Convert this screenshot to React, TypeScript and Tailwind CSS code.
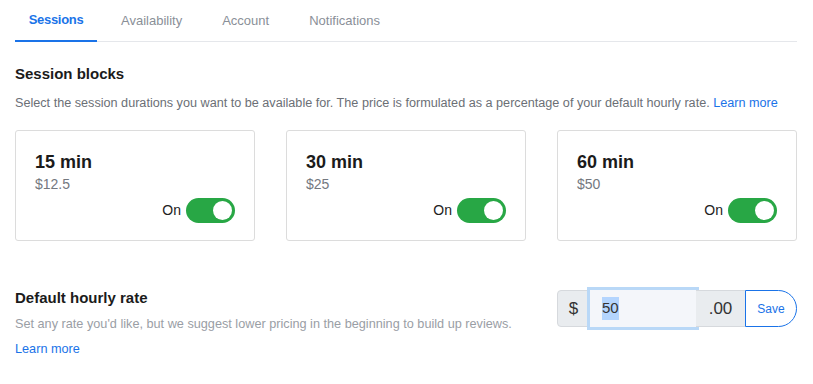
import React from "react";

interface Block {
  duration: string;
  price: string;
}

const Blocks: Block[] = [
  { duration: "15 min", price: "$12.5" },
  { duration: "30 min", price: "$25" },
  { duration: "60 min", price: "$50" },
];

const Tabs = ["Sessions", "Availability", "Account", "Notifications"];

function Toggle() {
  return (
    <div className="flex items-center gap-[5px]">
      <span className="text-[14px] text-[#222]">On</span>
      <div className="w-[49px] h-[25px] rounded-full bg-[#28a745] flex items-center justify-end pr-[3px]">
        <div className="w-[19px] h-[19px] rounded-full bg-white" />
      </div>
    </div>
  );
}

export default function App() {
  return (
    <div
      className="w-[813px] h-[384px] bg-white px-[15px] overflow-hidden"
      style={{ fontFamily: "'Liberation Sans', Arial, sans-serif" }}
    >
      <div className="w-[782px] flex border-b border-[#e5e7eb] h-[42px]">
        {Tabs.map((tab, index) => (
          <div
            key={index}
            className={
              index === 0
                ? "w-[82px] flex items-center justify-center text-[13px] font-semibold tracking-[-0.3px] text-[#1a73e8] border-b-2 border-[#1a73e8] -mb-px"
                : index === 1
                  ? "ml-1 px-5 flex items-center text-[13px] text-[#8a8f98]"
                  : "px-5 flex items-center text-[13px] text-[#8a8f98]"
            }
          >
            {tab}
          </div>
        ))}
      </div>

      <h2 className="mt-[22px] text-[15px] font-semibold text-[#1b1b1b] leading-5">Session blocks</h2>
      <p className="mt-[9px] text-[12.65px] text-[#6b6f76] leading-5 whitespace-nowrap">
        Select the session durations you want to be available for. The price is formulated as a percentage of your
        default hourly rate. <span className="text-[#1a73e8]">Learn more</span>
      </p>

      <div className="mt-[17px] w-[782px] grid grid-cols-3 gap-[31px]">
        {Blocks.map((block, index) => (
          <div key={index} className="h-[111px] border border-[#dcdcdc] rounded-[3px] px-[19px] pt-[19px] flex flex-col">
            <span className="text-[18px] font-bold text-[#1b1b1b] leading-6">{block.duration}</span>
            <span className="text-[14px] text-[#74787f] leading-5">{block.price}</span>
            <div className="flex justify-end mt-[4px]">
              <Toggle />
            </div>
          </div>
        ))}
      </div>

      <div className="mt-[47px] w-[782px] flex justify-between">
        <div>
          <h2 className="text-[15px] font-semibold text-[#1b1b1b] leading-5">Default hourly rate</h2>
          <p className="mt-[8px] text-[12.7px] text-[#9a9ea5] leading-4 whitespace-nowrap">
            Set any rate you'd like, but we suggest lower pricing in the beginning to build up reviews.
          </p>
          <p className="mt-[9px] text-[12.7px] text-[#1a73e8] leading-4">Learn more</p>
        </div>

        <div className="flex h-[37px] mt-[2px]">
          <div className="w-[33px] flex items-center justify-center bg-[#e9ecef] border border-[#d6d9dd] rounded-l-[4px] text-[17px] text-[#333]">
            $
          </div>
          <div className="w-[106px] flex items-center pl-[12px] bg-[#f4f6fa] shadow-[0_0_0_3px_#b9d8f7] text-[15px] text-[#333]">
            <span className="bg-[#b4d5fe]">50</span>
          </div>
          <div className="w-[49px] flex items-center justify-center bg-[#e9ecef] border-y border-[#d6d9dd] text-[17px] text-[#333]">
            .00
          </div>
          <div className="w-[52px] flex items-center justify-center border border-[#1a73e8] rounded-r-full text-[12px] text-[#1a73e8] bg-white">
            Save
          </div>
        </div>
      </div>
    </div>
  );
}
